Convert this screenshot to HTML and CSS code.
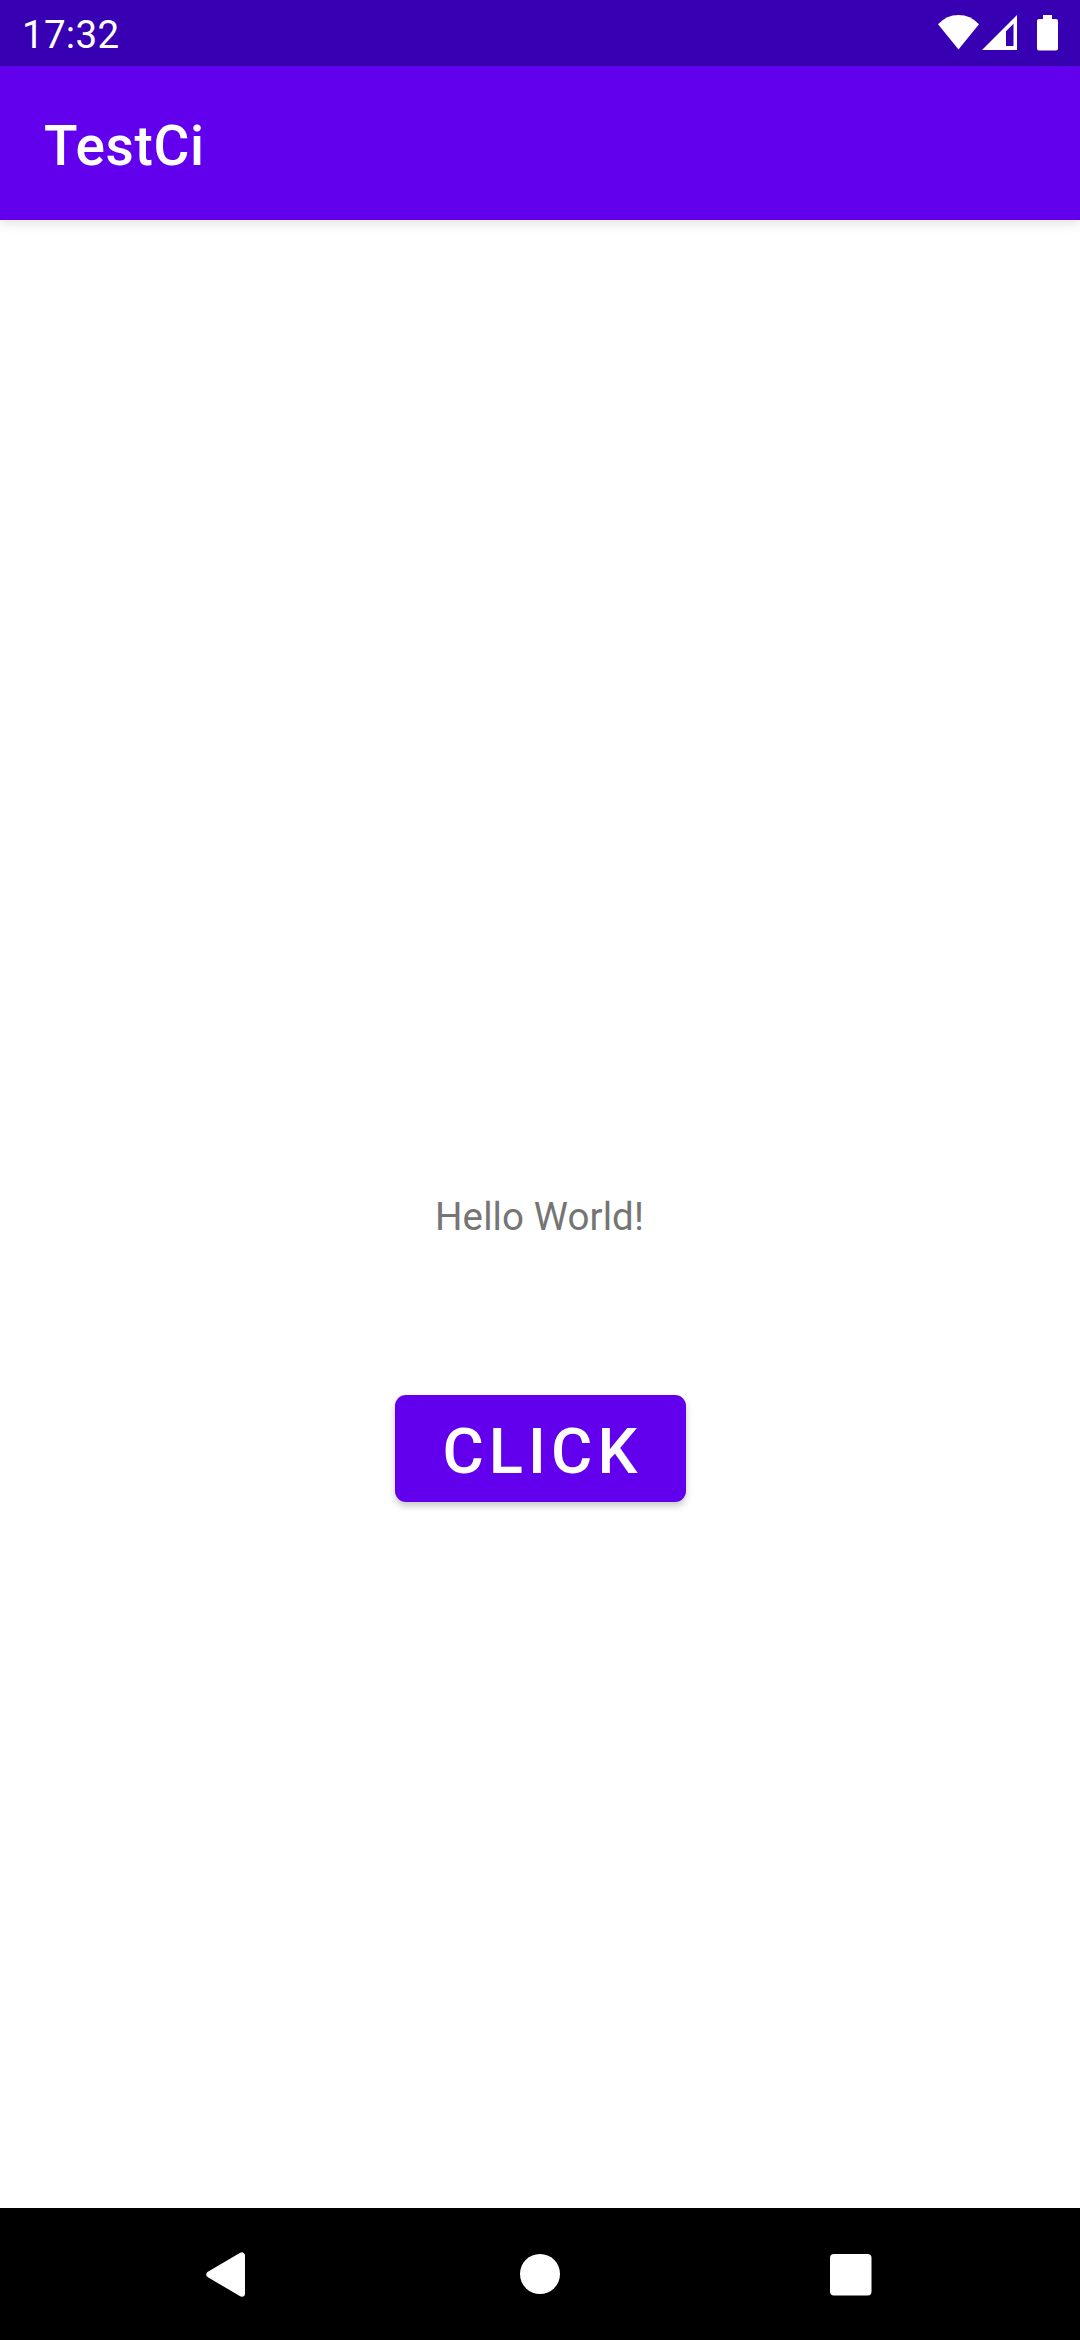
FILE: index.html
```html
<!DOCTYPE html>
<html lang="en">
<head>
<meta charset="utf-8">
<title>TestCi</title>
<link rel="stylesheet" href="styles.css">
</head>
<body>
<div class="status-bar">
  <span class="clock">17:32</span>
  <svg class="status-icons" width="122" height="66" viewBox="938 0 122 66" fill="#fff">
    <path d="M938 24.300Q946.500 15 958.500 15Q970.500 15 979 24.300L958.500 49.500Z"/>
    <path fill-rule="evenodd" d="M982 50L1017 15V50ZM1006 46H1013.500V23.800L1006 31.300Z"/>
    <path d="M1043 15H1052V19H1056Q1058 19 1058 21V48.500Q1058 50.500 1056 50.500H1039Q1037 50.500 1037 48.500V21Q1037 19 1039 19H1043Z"/>
  </svg>
</div>
<header class="app-bar"><h1 class="title">TestCi</h1></header>
<main class="content">
  <p class="greeting">Hello World!</p>
  <button class="click-button">CLICK</button>
</main>
<nav class="nav-bar">
  <svg width="44" height="46" viewBox="206 2252 44 46"><path d="M209.500 2274.500L241.800 2255.500V2293.500Z" fill="#fff" stroke="#fff" stroke-width="6.400" stroke-linejoin="round"/></svg>
  <svg width="42" height="42" viewBox="0 0 42 42"><circle cx="21" cy="20" r="20" fill="#fff"/></svg>
  <svg width="42" height="42" viewBox="0 0 42 42"><rect width="41.500" height="41.500" rx="4" fill="#fff"/></svg>
</nav>
</body>
</html>
```
FILE: styles.css
```css
* { box-sizing: border-box; }
body {
  margin: 0;
  width: 1080px;
  height: 2340px;
  display: flex;
  flex-direction: column;
  overflow: hidden;
  background: #fff;
  font-family: Roboto, sans-serif;
}
.status-bar {
  height: 66px;
  flex: none;
  display: flex;
  justify-content: space-between;
  padding: 0 20px 0 22px;
  background: #3700b3;
  color: #fff;
}
.clock { font-size: 38.5px; line-height: 69px; letter-spacing: .3px; }
.app-bar {
  height: 154px;
  flex: none;
  padding-left: 44px;
  background: #6200ee;
  color: #fff;
  box-shadow: 0 3px 11px rgba(0, 0, 0, .13);
}
.title {
  margin: 0;
  font-size: 55px;
  font-weight: 500;
  line-height: 160px;
  letter-spacing: .6px;
}
.content {
  flex: 1;
  display: flex;
  flex-direction: column;
  align-items: center;
  padding-top: 971px;
}
.greeting {
  margin: 0 1px 152px 0;
  font-size: 38.5px;
  line-height: 52px;
  letter-spacing: .1px;
  color: #757575;
}
.click-button {
  width: 291px;
  height: 107px;
  margin-left: 1px;
  padding: 6px 0 0 4px;
  border: 0;
  border-radius: 11px;
  background: #6200ee;
  color: #fff;
  font: 500 63.25px/101px Roboto, sans-serif;
  letter-spacing: 5.1px;
  box-shadow: 0 4px 7px rgba(0, 0, 0, .22);
}
.nav-bar {
  height: 132px;
  flex: none;
  display: flex;
  align-items: center;
  justify-content: space-between;
  padding: 2px 208px 0 206px;
  background: #000;
}
```
